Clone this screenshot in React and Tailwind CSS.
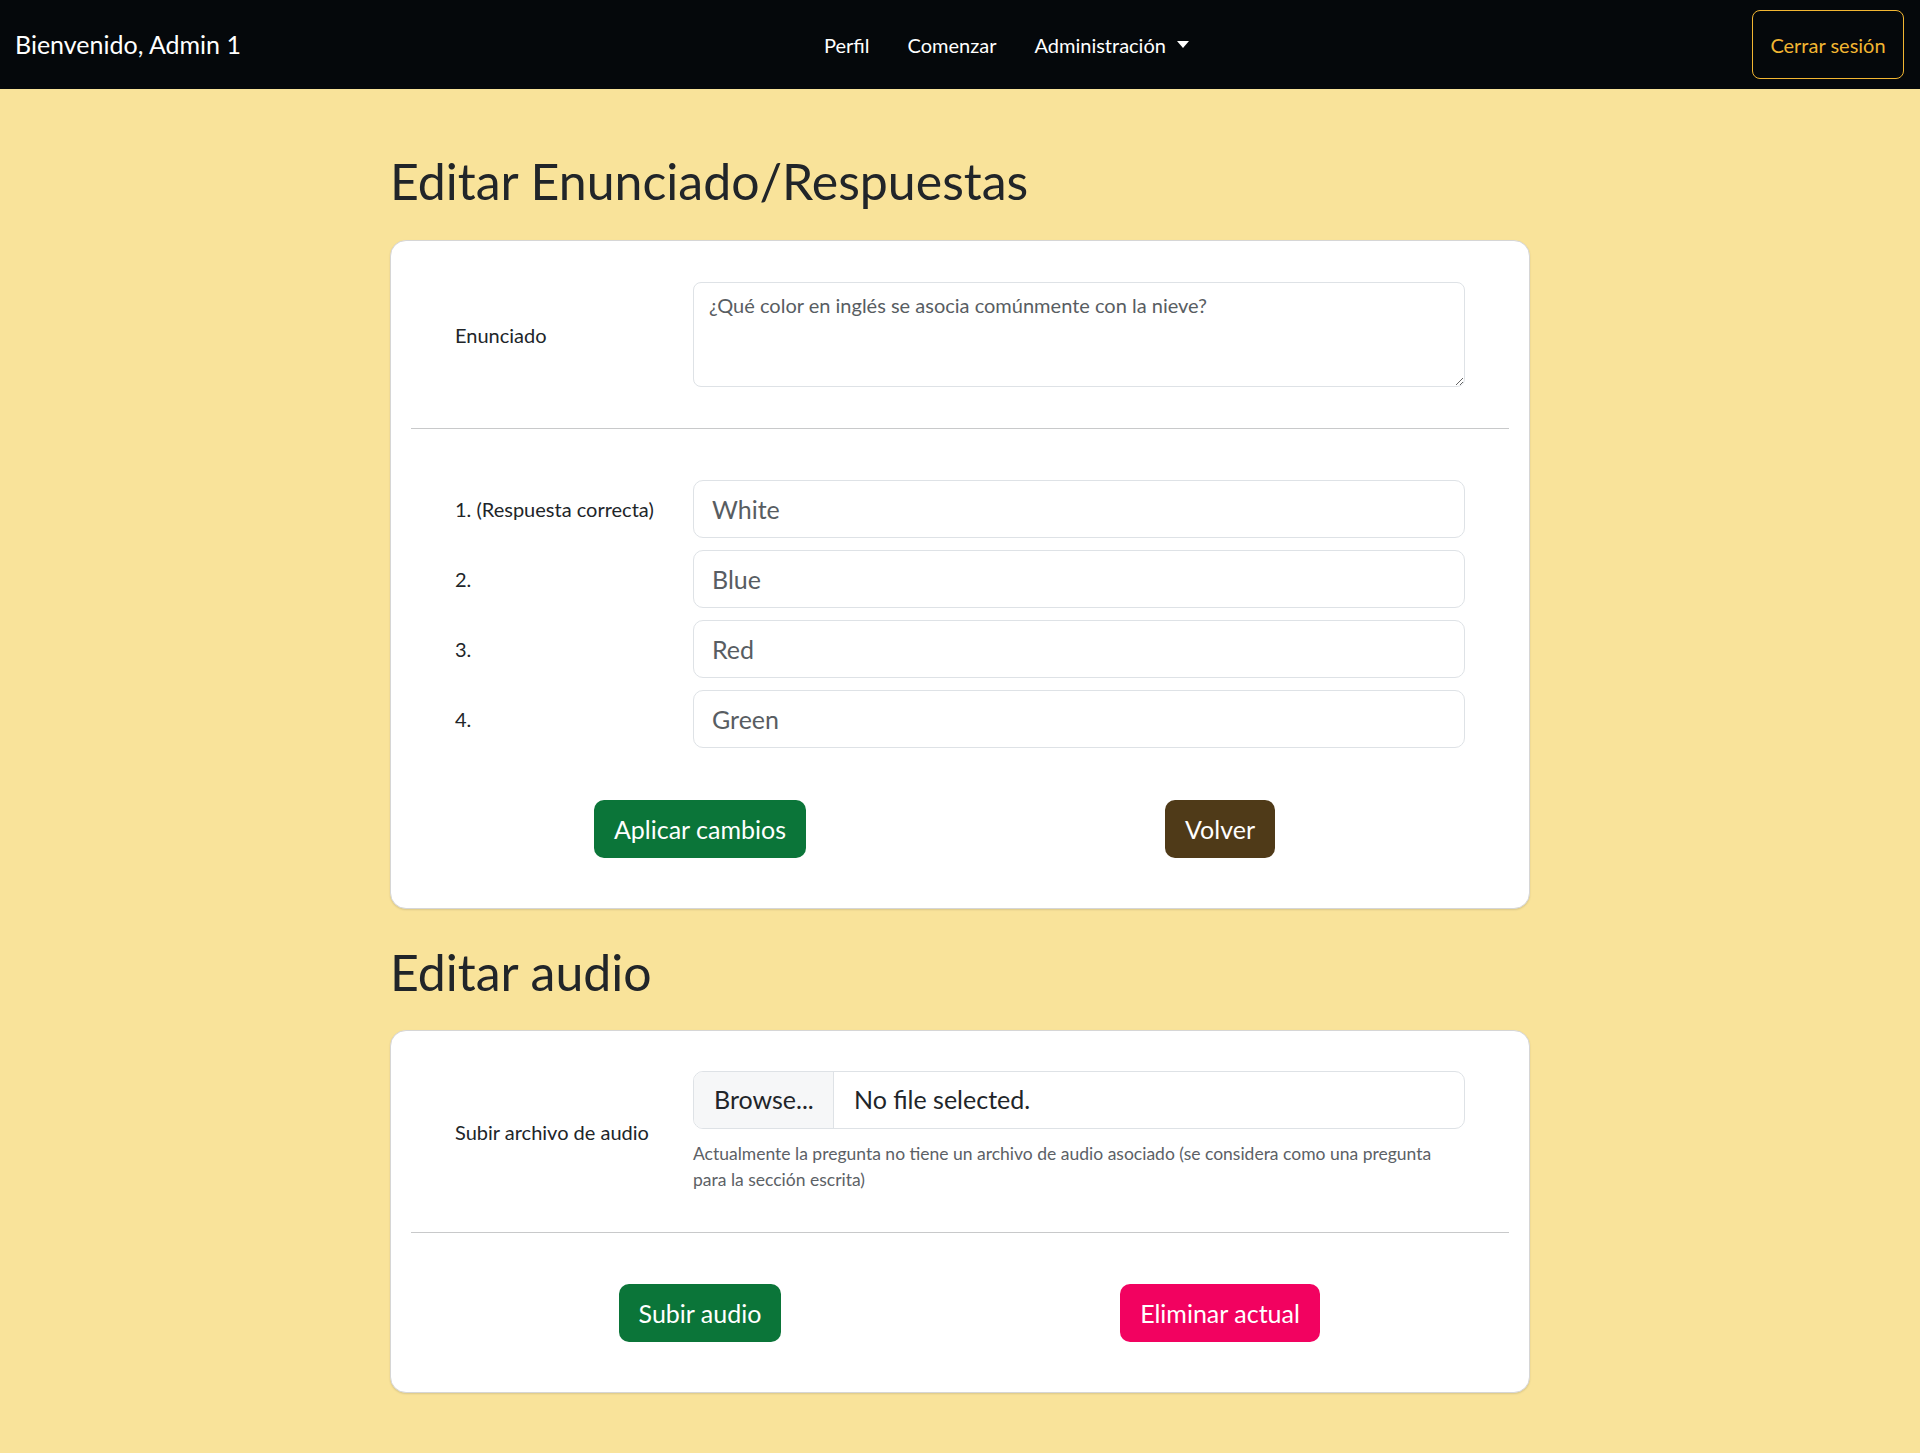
import React from "react";

function AnswerRow({ label, value }) {
  return (
    <div className="flex items-center">
      <div className="w-[238px] shrink-0 text-[20px] text-[#212529]">{label}</div>
      <input
        defaultValue={value}
        className="h-[58px] flex-1 min-w-0 rounded-[10px] border border-[#dee2e6] bg-white px-[18px] text-[25px] text-[#585d62] outline-none"
      />
    </div>
  );
}

function Btn({ children, color }) {
  return (
    <button
      className={`h-[58px] rounded-[10px] px-[20px] text-[25px] leading-none text-white ${color}`}
    >
      {children}
    </button>
  );
}

export default function App() {
  return (
    <div className="min-h-screen bg-[#f9e39a] font-['Lato','Noto_Sans',sans-serif] text-[#212529]">
      <nav className="flex h-[89px] items-center bg-[#05080b] pl-[15px] pr-[16px]">
        <div className="mr-[20px] text-[25px] text-white">Bienvenido, Admin 1</div>
        <div className="flex flex-1 items-center justify-center gap-[38px] text-[20px] text-white">
          <span>Perfil</span>
          <span>Comenzar</span>
          <span className="flex items-center">
            Administración
            <span className="ml-[11px] h-0 w-0 border-x-[6px] border-t-[7px] border-x-transparent border-t-white"></span>
          </span>
        </div>
        <button className="h-[69px] w-[152px] rounded-[8px] border border-[#f2b632] text-[20px] text-[#f2b632]">
          Cerrar sesión
        </button>
      </nav>

      <main className="mx-auto w-[1140px] pb-[60px]">
        <h1 className="mb-[29px] mt-[62px] text-[50px] leading-[1.2]">Editar Enunciado/Respuestas</h1>

        <section className="rounded-[16px] border border-[#d6d6d6] bg-white px-[20px] pb-[50px] pt-[41px] shadow-[0_1px_2px_rgba(0,0,0,0.12)]">
          <div className="flex items-center pl-[44px] pr-[44px]">
            <div className="w-[238px] shrink-0 text-[20px]">Enunciado</div>
            <textarea
              defaultValue="¿Qué color en inglés se asocia comúnmente con la nieve?"
              className="h-[105px] flex-1 min-w-0 rounded-[8px] border border-[#dee2e6] bg-white px-[15px] py-[7px] text-[20px] leading-[1.5] text-[#585d62] outline-none"
            />
          </div>
          <hr className="mt-[41px] border-0 border-t border-[#c8c9ca]" />
          <div className="mt-[51px] flex flex-col gap-[12px] pl-[44px] pr-[44px]">
            <AnswerRow label="1. (Respuesta correcta)" value="White" />
            <AnswerRow label="2." value="Blue" />
            <AnswerRow label="3." value="Red" />
            <AnswerRow label="4." value="Green" />
          </div>
          <div className="mx-auto mt-[52px] grid w-[1040px] grid-cols-2 justify-items-center">
            <Btn color="bg-[#0b7539]">Aplicar cambios</Btn>
            <Btn color="bg-[#4f3a18]">Volver</Btn>
          </div>
        </section>

        <h2 className="mb-[28px] mt-[33px] text-[50px] leading-[1.2]">Editar audio</h2>

        <section className="rounded-[16px] border border-[#d6d6d6] bg-white px-[20px] pb-[50px] pt-[40px] shadow-[0_1px_2px_rgba(0,0,0,0.12)]">
          <div className="flex items-center pl-[44px] pr-[44px]">
            <div className="w-[238px] shrink-0 text-[20px]">Subir archivo de audio</div>
            <div className="flex-1 min-w-0">
              <div className="flex h-[58px] overflow-hidden rounded-[10px] border border-[#dee2e6] text-[25px] text-[#212529]">
                <div className="flex w-[140px] items-center border-r border-[#dee2e6] bg-[#f6f7f8] px-[20px]">Browse...</div>
                <div className="flex items-center px-[20px]">No file selected.</div>
              </div>
              <p className="mt-[12px] text-[17.5px] leading-[26px] text-[#5c6166]">
                Actualmente la pregunta no tiene un archivo de audio asociado (se considera como una pregunta para la sección escrita)
              </p>
            </div>
          </div>
          <hr className="mt-[39px] border-0 border-t border-[#c8c9ca]" />
          <div className="mx-auto mt-[51px] grid w-[1040px] grid-cols-2 justify-items-center">
            <Btn color="bg-[#0b7539]">Subir audio</Btn>
            <Btn color="bg-[#f20260]">Eliminar actual</Btn>
          </div>
        </section>
      </main>
    </div>
  );
}
